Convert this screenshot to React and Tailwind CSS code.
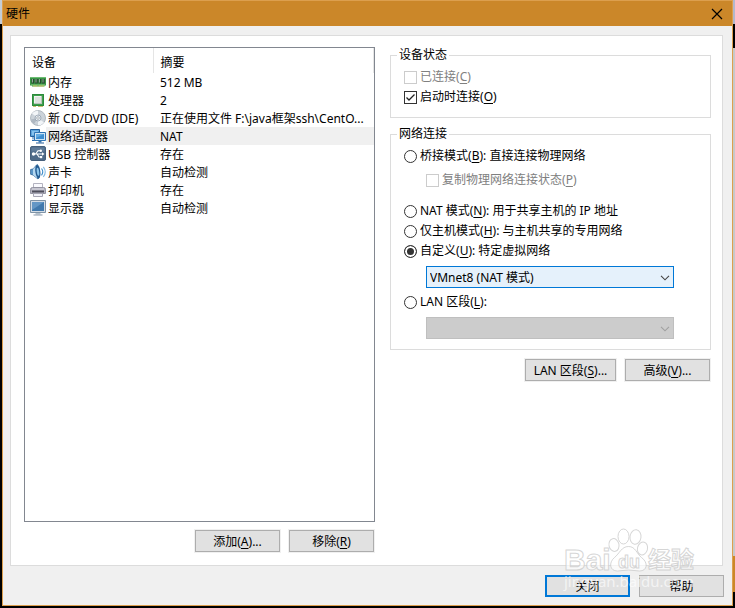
import { useState } from "react";

function MemoryIcon() {
  return (
    <svg width="16" height="16" viewBox="0 0 16 16" className="shrink-0" aria-hidden="true">
      <path d="M0 3h16v8.500h-1.500v1H2v-1H0z" fill="#3a9646" />
      <path d="M0 3h16v1H0z" fill="#6cbc72" />
      <path d="M1.500 5h2.800v4.500H1.500zM5 5h2.800v4.500H5zM8.500 5h2.800v4.500H8.500zM12 5h2.800v4.500H12z" fill="#274a2f" />
      <path d="M2 5h1v3.500H2zM5.500 5h1v3.500h-1zM9 5h1v3.500H9zM12.500 5h1v3.500h-1z" fill="#8fa895" />
      <path d="M1 10.500h14v1H1z" fill="#8bd183" />
      <path d="M3 11.500h4.500v1H3zM8.500 11.500H14v1H8.500z" fill="#d9c56a" />
    </svg>
  );
}

function CpuIcon() {
  return (
    <svg width="16" height="16" viewBox="0 0 16 16" className="shrink-0" aria-hidden="true">
      <path d="M2 2h12v12H2z" fill="#3fa04d" />
      <path d="M2.500 2.500h11v11h-11z" fill="none" stroke="#2c8a3c" />
      <path d="M4 4h8v8H4z" fill="#f2f4f2" />
      <path d="M5 5h6v6H5z" fill="#dde2de" />
      <path d="M12 4v8H4v-1h7V4z" fill="#b9c2bb" />
      <path d="M3 14.500h3M8 14.500h5" stroke="#c9bf74" />
    </svg>
  );
}

function DiscIcon() {
  return (
    <svg width="16" height="16" viewBox="0 0 16 16" className="shrink-0" aria-hidden="true">
      <circle cx="8" cy="8" r="7.500" fill="#ccd3da" stroke="#a5adb6" strokeWidth="0.8" />
      <path d="M8 8L2 3.500A7.200 7.200 0 0 1 8 .8zM8 8l6 4.500A7.200 7.200 0 0 1 8 15.200z" fill="#f2f5f8" />
      <path d="M8 8L.9 9.500A7.200 7.200 0 0 0 4 14z" fill="#afb8c2" />
      <circle cx="8" cy="8" r="3" fill="#e8edf2" stroke="#93a0ad" strokeWidth="0.8" />
      <circle cx="8" cy="8" r="1.300" fill="#fff" stroke="#7d8994" strokeWidth="0.6" />
    </svg>
  );
}

function NetworkIcon() {
  return (
    <svg width="16" height="16" viewBox="0 0 16 16" className="shrink-0" aria-hidden="true">
      <path d="M.5 1.500h9v7h-9z" fill="#5ea5dc" stroke="#245f9c" />
      <path d="M2 3h6v4H2z" fill="#85c2ee" />
      <path d="M3 9v2.500M2 12.500h3" fill="none" stroke="#2b6bab" />
      <path d="M4.500 4.500h11v8h-11z" fill="#cfe5f5" stroke="#2f74b4" />
      <path d="M6 6h8v5H6z" fill="#3d8ed0" />
      <path d="M6 6h8L6 10z" fill="#62abe2" />
      <path d="M8.500 13h3v1.500h-3z" fill="#3c78ae" />
      <path d="M6 14.500h8v1H6z" fill="#245f9c" />
    </svg>
  );
}

function UsbIcon() {
  return (
    <svg width="16" height="16" viewBox="0 0 16 16" className="shrink-0" aria-hidden="true">
      <rect x="0.500" y="0.500" width="15" height="14" rx="1.500" fill="#4e6a88" stroke="#46607c" />
      <path d="M1.500 1.500h13v4h-13z" fill="#5f7b98" />
      <path d="M3 8h10M5.500 8L8 4.800h2.500M7 8l2 3h1.500" fill="none" stroke="#fff" strokeWidth="1.100" />
      <circle cx="3.500" cy="8" r="1.700" fill="#fff" />
      <path d="M12 6.300L14.500 8 12 9.700z" fill="#fff" />
      <circle cx="10.800" cy="4.800" r="1.200" fill="#fff" />
      <path d="M10 10h2.200v2.200H10z" fill="#fff" />
    </svg>
  );
}

function SoundIcon() {
  return (
    <svg width="16" height="16" viewBox="0 0 16 16" className="shrink-0" aria-hidden="true">
      <path d="M.6 5.500L3 5l4-4.500c3 1 4 12 1 14.500L3 11l-2.400-.7z" fill="#5b97c8" stroke="#2e6496" strokeWidth="0.800" />
      <path d="M3 5L7 1v13L3 11z" fill="#b5d8f0" />
      <ellipse cx="7.800" cy="7.800" rx="2.400" ry="6.800" transform="rotate(-8 7.800 7.800)" fill="#235a90" />
      <ellipse cx="8" cy="7.800" rx="1.200" ry="4" transform="rotate(-8 8 7.800)" fill="#8cc5ea" />
      <path d="M11.500 4.500c1.500 2 1.500 4.800 0 6.800" fill="none" stroke="#3f8ecb" strokeWidth="1.100" />
      <path d="M13.300 2.800c2.300 3 2.300 7.200 0 10.200" fill="none" stroke="#84bbe3" strokeWidth="1.100" />
    </svg>
  );
}

function PrinterIcon() {
  return (
    <svg width="16" height="16" viewBox="0 0 16 16" className="shrink-0" aria-hidden="true">
      <path d="M3.500 1.500h9v5h-9z" fill="#fafafe" stroke="#b4b4c0" />
      <path d="M.5 7.500q0-2 2-2h11q2 0 2 2v4H.5z" fill="#b4b4c0" stroke="#9494a2" />
      <path d="M2 6.500h12v1H2z" fill="#dcdce4" />
      <path d="M2 8.500h12v2H2z" fill="#4e4e5c" />
      <path d="M3.500 11.500h9v3h-9z" fill="#f1f1f9" stroke="#a6a6b4" />
    </svg>
  );
}

function DisplayIcon() {
  return (
    <svg width="16" height="16" viewBox="0 0 16 16" className="shrink-0" aria-hidden="true">
      <path d="M.5.500h15v12H.5z" fill="#d3dce5" stroke="#7f93a6" />
      <path d="M2 2h12v9H2z" fill="#4179ad" />
      <path d="M2 2h12L2 10z" fill="#6497c5" />
      <path d="M5.500 13h5v1.500h-5z" fill="#b3c0cb" />
      <path d="M3.500 14.500h9v1h-9z" fill="#8697a8" />
    </svg>
  );
}

const devices = [
  { name: "内存", summary: "512 MB", Icon: MemoryIcon },
  { name: "处理器", summary: "2", Icon: CpuIcon },
  { name: "新 CD/DVD (IDE)", summary: "正在使用文件 F:\\java框架ssh\\CentO...", Icon: DiscIcon },
  { name: "网络适配器", summary: "NAT", Icon: NetworkIcon },
  { name: "USB 控制器", summary: "存在", Icon: UsbIcon },
  { name: "声卡", summary: "自动检测", Icon: SoundIcon },
  { name: "打印机", summary: "存在", Icon: PrinterIcon },
  { name: "显示器", summary: "自动检测", Icon: DisplayIcon },
];

// Access key in brackets, e.g. (A)
function Key({ k }) {
  return (
    <>
      (<span className="underline underline-offset-2">{k}</span>)
    </>
  );
}

function Button({ children, wide, primary, ...props }) {
  return (
    <button
      type="button"
      className={`h-[22px] bg-[#e1e1e1] pt-0.5 leading-4 whitespace-nowrap ${wide ? "w-[91px]" : "w-[85px]"} ${
        primary ? "border-2 border-[#0078d7]" : "border border-[#adadad] outline outline-[#f0f0f0]"
      }`}
      {...props}
    >
      {children}
    </button>
  );
}

function Check({ children, disabled, ...props }) {
  return (
    <label className={`flex h-5 items-center gap-[3px] ${disabled ? "text-[#808080]" : ""}`}>
      <span className="relative flex">
        <input
          type="checkbox"
          disabled={disabled}
          className="peer size-[13px] appearance-none border border-[#333] bg-white disabled:border-[#ccc]"
          {...props}
        />
        <svg
          viewBox="0 0 13 13"
          className="pointer-events-none absolute inset-0 hidden size-[13px] peer-checked:block"
          aria-hidden="true"
        >
          <path d="M2.500 6.500L5 9l5.500-5.500" fill="none" stroke="#222" strokeWidth="1.300" />
        </svg>
      </span>
      <span>{children}</span>
    </label>
  );
}

function Radio({ children, ...props }) {
  return (
    <label className="flex h-5 items-center gap-[3px]">
      <input
        type="radio"
        name="connection"
        className="size-[13px] shrink-0 appearance-none rounded-full border border-[#333] bg-white checked:bg-[#333] checked:shadow-[inset_0_0_0_2px_#fff]"
        {...props}
      />
      <span>{children}</span>
    </label>
  );
}

function Select({ children, ...props }) {
  return (
    <div className="relative mr-[36px] ml-[22px]">
      <select
        className="peer block h-[22px] w-full appearance-none border border-[#0078d7] bg-[#e5f1fb] pt-0.5 pl-[3px] leading-4 disabled:border-[#bfbfbf] disabled:bg-[#ccc]"
        {...props}
      >
        {children}
      </select>
      <svg
        viewBox="0 0 10 6"
        className="pointer-events-none absolute top-[9px] right-1 h-[6px] w-[10px] text-[#444] peer-disabled:text-[#a0a0a0]"
        aria-hidden="true"
      >
        <path d="M1 .8l4 4 4-4" fill="none" stroke="currentColor" strokeWidth="1.100" />
      </svg>
    </div>
  );
}

function Group({ title, children, className }) {
  return (
    <fieldset className={`min-w-0 border border-[#dcdcdc] pr-0 pb-[10px] pl-[13px] ${className}`}>
      <legend className="-ml-[7px] px-[2px] leading-4">{title}</legend>
      {children}
    </fieldset>
  );
}

function Watermark() {
  return (
    <svg
      viewBox="0 0 140 72"
      className="pointer-events-none absolute right-[32px] bottom-[8px] h-[72px] w-[140px]"
      fill="#fff"
      fillOpacity="0.65"
      stroke="#c8c8c8"
      strokeOpacity="0.75"
      aria-hidden="true"
    >
      <text x="4" y="45" fontFamily="Liberation Sans, sans-serif" fontSize="30" fontWeight="700">
        Bai
      </text>
      <ellipse cx="54" cy="20" rx="5" ry="6.500" transform="rotate(-12 54 20)" />
      <ellipse cx="63.500" cy="11.500" rx="5.500" ry="7.500" />
      <ellipse cx="75.500" cy="12" rx="5.500" ry="7.200" transform="rotate(8 75.500 12)" />
      <ellipse cx="82.500" cy="23.500" rx="5" ry="6.500" transform="rotate(15 82.500 23.500)" />
      <path d="M68.500 21.500c7 0 8 7 13 11 7 5 6 13.500-2 13.500-4 0-7-1-11-1s-7 1-11 1c-8 0-9-8.500-3-13.500 5-4 7-11 14-11z" />
      <text x="58" y="43" fontFamily="Liberation Sans, sans-serif" fontSize="18" fontWeight="700">
        du
      </text>
      <text x="88" y="43" fontFamily="Noto Sans CJK SC, sans-serif" fontSize="23" fontWeight="700">
        经验
      </text>
      <text x="4" y="62" fontFamily="Noto Sans, sans-serif" fontSize="15" stroke="none">
        jingyan.baidu.com
      </text>
    </svg>
  );
}

export default function App() {
  const [selected, setSelected] = useState("网络适配器");

  return (
    <div className="flex min-h-screen bg-black pb-[2px] font-['Noto_Sans','Noto_Sans_CJK_SC',sans-serif] text-xs text-black">
      <div className="w-[2px] shrink-0">
        <div className="h-6 bg-[#c5cdd6]" />
      </div>

      <main className="relative flex min-w-0 flex-1 flex-col border border-[#dc9f4e] bg-[#f0f0f0]">
        <header className="flex h-[25px] items-center justify-between bg-[#cb8729] pr-[9px] pl-[3px]">
          <h1>硬件</h1>
          <button type="button" aria-label="关闭">
            <svg width="12" height="12" viewBox="0 0 12 12" aria-hidden="true">
              <path d="M1 1l10 10M11 1L1 11" fill="none" stroke="#000" strokeWidth="1.200" />
            </svg>
          </button>
        </header>

        <div className="mt-[9px] mr-[9px] ml-[7px] grid flex-1 grid-cols-[351fr_321fr] gap-[15px] border border-[#dcdcdc] bg-white pt-[11px] pr-[11px] pb-[13px] pl-[13px]">
          <section className="flex min-w-0 flex-col gap-2">
            <div className="flex-1 border border-[#828790]">
              <table className="w-full table-fixed">
                <thead>
                  <tr className="h-[25px] text-left">
                    <th className="w-[128px] border-r border-[#e5e5e5] pt-[5px] pl-[7px] font-normal">设备</th>
                    <th className="border-r border-[#e5e5e5] pt-[5px] pl-[7px] font-normal">摘要</th>
                  </tr>
                </thead>
                <tbody>
                  {devices.map(({ name, summary, Icon }) => (
                    <tr key={name} onClick={() => setSelected(name)}>
                      <td className="p-0">
                        <div className="flex h-[18px] items-center pl-[5px]">
                          <Icon />
                          <span
                            className={`flex-1 pt-0.5 pl-[2px] leading-4 whitespace-nowrap ${
                              selected === name ? "bg-[#f0f0f0]" : ""
                            }`}
                          >
                            {name}
                          </span>
                        </div>
                      </td>
                      <td
                        className={`truncate pt-0.5 pb-0 pl-[7px] leading-4 ${
                          selected === name ? "bg-[#f0f0f0]" : ""
                        }`}
                      >
                        {summary}
                      </td>
                    </tr>
                  ))}
                </tbody>
              </table>
            </div>
            <div className="flex justify-end gap-[9px] pr-px">
              <Button>
                添加
                <Key k="A" />
                ...
              </Button>
              <Button>
                移除
                <Key k="R" />
              </Button>
            </div>
          </section>

          <section className="min-w-0">
            <Group title="设备状态" className="pt-1">
              <Check disabled>
                已连接
                <Key k="C" />
              </Check>
              <Check defaultChecked>
                启动时连接
                <Key k="O" />
              </Check>
            </Group>

            <Group title="网络连接" className="mt-2 pt-1">
              <Radio>
                桥接模式
                <Key k="B" />: 直接连接物理网络
              </Radio>
              <div className="mt-1 mb-[11px] ml-[22px]">
                <Check disabled>
                  复制物理网络连接状态
                  <Key k="P" />
                </Check>
              </div>
              <Radio>
                NAT 模式
                <Key k="N" />: 用于共享主机的 IP 地址
              </Radio>
              <Radio>
                仅主机模式
                <Key k="H" />: 与主机共享的专用网络
              </Radio>
              <Radio defaultChecked>
                自定义
                <Key k="U" />: 特定虚拟网络
              </Radio>
              <div className="mt-[5px] mb-1">
                <Select aria-label="特定虚拟网络">
                  <option>VMnet8 (NAT 模式)</option>
                </Select>
              </div>
              <Radio>
                LAN 区段
                <Key k="L" />:
              </Radio>
              <div className="mt-[5px]">
                <Select aria-label="LAN 区段" disabled />
              </div>
            </Group>

            <div className="mt-[9px] flex justify-end gap-[9px] pr-px">
              <Button wide>
                LAN 区段
                <Key k="S" />
                ...
              </Button>
              <Button>
                高级
                <Key k="V" />
                ...
              </Button>
            </div>
          </section>
        </div>

        <footer className="flex justify-end gap-[9px] pt-[9px] pr-2 pb-2">
          <Button primary>关闭</Button>
          <Button>帮助</Button>
        </footer>

        <Watermark />
      </main>

      {/* sliver of the desktop behind the dialog */}
      <div className="flex w-[2px] shrink-0 flex-col">
        <div className="h-6 bg-[#b4b8cc]" />
        <div className="h-6 bg-black" />
        <div className="flex-1 bg-[#c8c8c8]" />
        <div className="h-9 bg-[#cb8729]" />
        <div className="h-[14px] bg-black" />
      </div>
    </div>
  );
}
